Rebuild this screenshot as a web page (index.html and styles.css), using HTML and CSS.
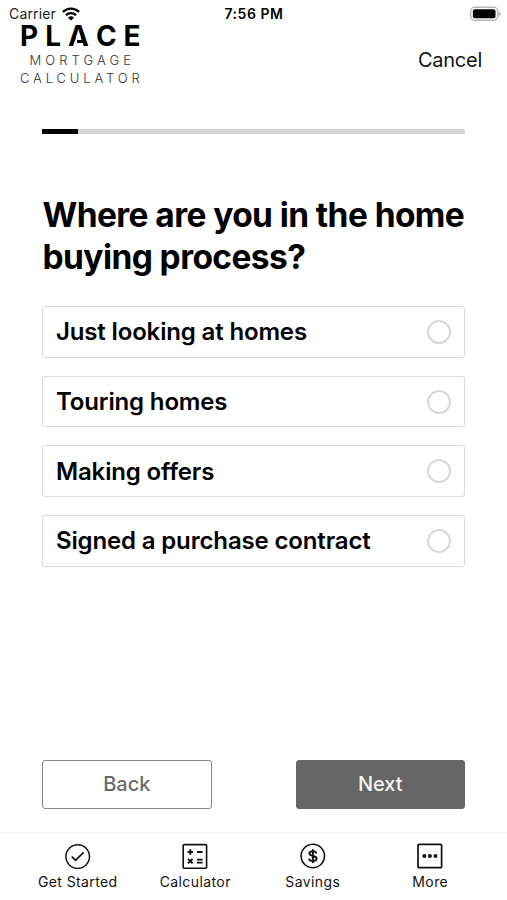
FILE: index.html
```html
<!DOCTYPE html>
<html lang="en">
<head>
    <meta charset="utf-8">
    <title>Place Mortgage Calculator</title>
    <link rel="stylesheet" href="styles.css">
</head>
<body>
    <div class="status-bar">
        <div class="carrier">
            <span>Carrier</span>
            <svg class="wifi" width="18" height="14" viewBox="0 0 18 14" fill="none" stroke="#000" stroke-width="2.3">
                <path d="M0.9 5a11.6 11.6 0 0 1 16.2 0"/>
                <path d="M3.9 8.3a7.3 7.3 0 0 1 10.2 0"/>
                <path d="M9 13.6 6 10.7a4.3 4.3 0 0 1 6 0z" fill="#000" stroke="none"/>
            </svg>
        </div>
        <div class="time">7:56 PM</div>
        <svg class="battery" width="32" height="16" viewBox="0 0 32 16">
            <rect x="0.7" y="1.2" width="27" height="13" rx="4" fill="#fff" stroke="#b8b8b8" stroke-width="1.4"/>
            <rect x="2.9" y="3.2" width="22.6" height="9" rx="2" fill="#000"/>
            <path d="M28.6 5.4c2.6 1 2.6 3.8 0 4.8z" fill="#b0b0b0"/>
        </svg>
    </div>

    <header class="header">
        <div class="logo">
            <div class="logo-name">PL<span class="logo-a">A</span>CE</div>
            <div class="logo-sub mortgage">MORTGAGE</div>
            <div class="logo-sub calculator">CALCULATOR</div>
        </div>
        <a class="cancel">Cancel</a>
    </header>

    <main class="content">
        <div class="progress"><div class="progress-fill"></div></div>
        <h1>Where are you in the home buying process?</h1>
        <div class="options">
            <label class="option"><span>Just looking at homes</span><input type="radio" name="stage"></label>
            <label class="option"><span>Touring homes</span><input type="radio" name="stage"></label>
            <label class="option"><span>Making offers</span><input type="radio" name="stage"></label>
            <label class="option"><span>Signed a purchase contract</span><input type="radio" name="stage"></label>
        </div>
        <div class="buttons">
            <button type="button" class="back-btn">Back</button>
            <button type="button" class="next-btn">Next</button>
        </div>
    </main>

    <nav class="tabs">
        <a class="tab">
            <svg width="26" height="26" viewBox="0 0 26 26" fill="none" stroke="#111" stroke-width="1.5">
                <circle cx="12.7" cy="13.6" r="11.8"/>
                <path d="M6.8 13.6l3.8 3.7 8-8" stroke-width="1.7"/>
            </svg>
            <span>Get Started</span>
        </a>
        <a class="tab">
            <svg width="26" height="26" viewBox="0 0 26 26" fill="none" stroke="#111" stroke-width="1.6">
                <rect x="1.2" y="1.6" width="23.4" height="23.6" rx="1"/>
                <path d="M5.6 9h5.4M8.3 6.3v5.4M15 9h5.6M6 15.8l4.6 4.6M10.6 15.8L6 20.4M15 16.6h5.6M15 19.6h5.6" stroke-width="1.9"/>
            </svg>
            <span>Calculator</span>
        </a>
        <a class="tab">
            <svg width="26" height="26" viewBox="0 0 26 26" fill="none" stroke="#111" stroke-width="1.6">
                <circle cx="12.8" cy="13" r="11.7"/>
                <path d="M16.4 10.4c-.4-1.5-1.8-2.2-3.5-2.2-2 0-3.5 1-3.5 2.4 0 3.3 7.2 1.5 7.2 5 0 1.5-1.6 2.5-3.7 2.5-2 0-3.5-.9-3.8-2.5M12.9 6.2v13.8" stroke-width="1.9"/>
            </svg>
            <span>Savings</span>
        </a>
        <a class="tab">
            <svg width="26" height="26" viewBox="0 0 26 26" fill="none" stroke="#111" stroke-width="1.7">
                <rect x="1" y="1.3" width="23.6" height="23.4" rx="1"/>
                <g fill="#111" stroke="none">
                    <circle cx="7.3" cy="13" r="2"/>
                    <circle cx="12.9" cy="13" r="2"/>
                    <circle cx="18.5" cy="13" r="2"/>
                </g>
            </svg>
            <span>More</span>
        </a>
    </nav>
</body>
</html>
```

FILE: styles.css
```css
* {
    box-sizing: border-box;
}
body {
    margin: 0;
    height: 900px;
    background-color: #fff;
    color: #000;
    font-family: Inter, "Liberation Sans", sans-serif;
    display: flex;
    flex-direction: column;
    overflow: hidden;
}
.status-bar {
    display: grid;
    grid-template-columns: 1fr auto 1fr;
    align-items: center;
    height: 26px;
    padding: 1px 5px 0 9px;
    font-size: 14px;
}
.carrier {
    display: flex;
    align-items: center;
    gap: 6px;
    color: #222;
    letter-spacing: 0.15px;
}
.time {
    font-weight: 600;
    letter-spacing: 0.55px;
    margin-right: 3px;
}
.battery {
    justify-self: end;
}
.header {
    display: flex;
    justify-content: space-between;
    height: 103px;
    padding: 0 25px 0 20px;
}
.logo {
    width: 122px;
    white-space: nowrap;
}
.logo-name {
    font-size: 28px;
    font-weight: 700;
    line-height: 20px;
    letter-spacing: 7px;
}
.logo-a {
    position: relative;
}
/* the A has an open left side: clear the inside, then draw a short low bar */
.logo-a::before {
    content: "";
    position: absolute;
    left: 0;
    top: 0;
    width: 21px;
    height: 28px;
    background-color: #fff;
    clip-path: polygon(9.2px 15px, 11.6px 15px, 15.8px 28px, 5px 28px);
}
.logo-a::after {
    content: "";
    position: absolute;
    left: 9px;
    top: 21px;
    width: 6px;
    height: 3px;
    background-color: #000;
}
.logo-sub {
    font-size: 13px;
    line-height: 18px;
    color: #333;
    font-weight: 300;
    letter-spacing: 3.85px;
}
.mortgage {
    padding: 5px 0 0 9.5px;
    letter-spacing: 4.1px;
}
.cancel {
    font-size: 20px;
    line-height: 24px;
    padding-top: 22px;
    color: #111;
    letter-spacing: -0.25px;
}
.content {
    padding: 0 42px;
    flex: 1;
    display: flex;
    flex-direction: column;
}
.progress {
    height: 5px;
    background-color: #d6d6d6;
}
.progress-fill {
    width: 36px;
    height: 5px;
    background-color: #000;
}
h1 {
    margin: 60px -10px 0 0.5px;
    font-size: 33.5px;
    line-height: 42px;
    font-weight: 700;
    letter-spacing: -0.58px;
}
.options {
    display: flex;
    flex-direction: column;
    gap: 18px;
    margin-top: 28px;
}
.option {
    display: flex;
    align-items: center;
    justify-content: space-between;
    height: 51.7px;
    padding: 0 13px;
    border: 1.5px solid #dadada;
    border-radius: 3px;
    font-size: 24px;
    font-weight: 600;
    letter-spacing: -0.15px;
}
.option input {
    appearance: none;
    width: 24px;
    height: 24px;
    margin: 0;
    border: 2px solid #d8d8d8;
    border-radius: 50%;
}
.buttons {
    display: flex;
    justify-content: space-between;
    margin-top: auto;
    padding-bottom: 23.5px;
}
.buttons button {
    width: 169.5px;
    height: 49px;
    padding: 0;
    border: 1.5px solid #8a8a8a;
    border-radius: 3px;
    background-color: #fff;
    color: #6b6b6b;
    font-family: inherit;
    font-size: 20px;
    font-weight: 500;
}
.buttons .next-btn {
    border-color: #666;
    background-color: #666;
    color: #f5f5f5;
}
.tabs {
    display: grid;
    grid-template-columns: repeat(4, 117.5px);
    height: 68px;
    padding: 9px 0 0 19px;
    border-top: 2px solid #f7f7f7;
}
.tab {
    display: flex;
    flex-direction: column;
    align-items: center;
    gap: 4px;
    font-size: 14px;
    line-height: 18px;
    letter-spacing: 0.4px;
    color: #111;
}
```
